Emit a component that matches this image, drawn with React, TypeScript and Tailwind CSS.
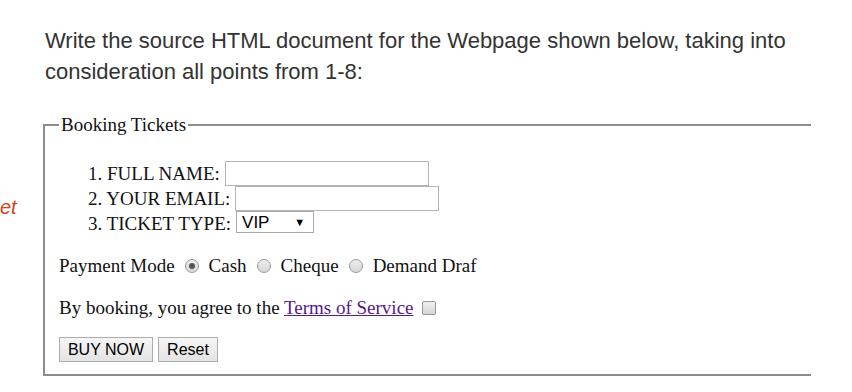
const serif = "font-['Liberation_Serif','Times_New_Roman',serif]";

function Radio({ checked }: { checked?: boolean }) {
  return (
    <span className="mx-[10px] inline-flex h-[14px] w-[14px] items-center justify-center rounded-full border border-[#9a9a9a] bg-gradient-to-b from-[#eeeeee] to-[#d6d6d6]">
      {checked && <span className="h-[6px] w-[6px] rounded-full bg-[#555]" />}
    </span>
  );
}

export default function App() {
  return (
    <div className="h-[392px] w-[852px] overflow-hidden bg-white">
      <p className="pl-[45px] pt-[25px] font-['Liberation_Sans',Arial,sans-serif] text-[22px] leading-[31px] text-[#333]">
        Write the source HTML document for the Webpage shown below, taking into
        <br />
        consideration all points from 1-8:
      </p>

      <div className="mt-[25px] flex">
        <div className="w-[43px] shrink-0 pt-[84px]">
          <span className="font-['Liberation_Sans',Arial,sans-serif] text-[20px] italic leading-none text-[#d0451c]">
            et
          </span>
        </div>

        <fieldset
          className={`w-[768px] border-2 border-r-0 border-[#8d8d8d] pb-[12px] pl-[14px] ${serif} text-[19px] text-[#111]`}
        >
          <legend className="px-[2px] leading-[25px]">Booking Tickets</legend>

          <ol className="mt-[24px] pl-[29px]">
            <li className="flex h-[25px] items-start leading-[25px]">
              <span>1. FULL NAME:</span>
              <span className="ml-[5px] h-[25px] w-[204px] border border-[#b4b4b4] bg-white" />
            </li>
            <li className="flex h-[25px] items-start leading-[25px]">
              <span>2. YOUR EMAIL:</span>
              <span className="ml-[5px] h-[25px] w-[204px] border border-[#b4b4b4] bg-white" />
            </li>
            <li className="flex h-[25px] items-start leading-[25px]">
              <span>3. TICKET TYPE:</span>
              <span className="ml-[5px] flex h-[22px] w-[78px] items-center justify-between border border-[#a9a9a9] bg-white pl-[5px] pr-[8px] font-['Liberation_Sans',Arial,sans-serif] text-[17px] leading-none text-black">
                VIP
                <span className="text-[11px]">▼</span>
              </span>
            </li>
          </ol>

          <div className="mt-[17px] flex h-[25px] items-center leading-[25px]">
            <span>Payment Mode</span>
            <Radio checked />
            <span>Cash</span>
            <Radio />
            <span>Cheque</span>
            <Radio />
            <span>Demand Draf</span>
          </div>

          <div className="mt-[17px] flex h-[25px] items-center leading-[25px]">
            <span>
              By booking, you agree to the{' '}
              <a className="text-[#551a8b] underline">Terms of Service</a>
            </span>
            <span className="ml-[8px] h-[14px] w-[14px] rounded-[2px] border border-[#9a9a9a] bg-gradient-to-b from-[#f0f0f0] to-[#d6d6d6]" />
          </div>

          <div className="mt-[17px] flex gap-[5px] font-['Liberation_Sans',Arial,sans-serif] text-[16px] text-black">
            <button className="h-[25px] w-[94px] border border-[#adadad] bg-gradient-to-b from-[#f6f6f6] to-[#e3e3e3]">
              BUY NOW
            </button>
            <button className="h-[25px] w-[60px] border border-[#adadad] bg-gradient-to-b from-[#f6f6f6] to-[#e3e3e3]">
              Reset
            </button>
          </div>
        </fieldset>
      </div>
    </div>
  );
}
